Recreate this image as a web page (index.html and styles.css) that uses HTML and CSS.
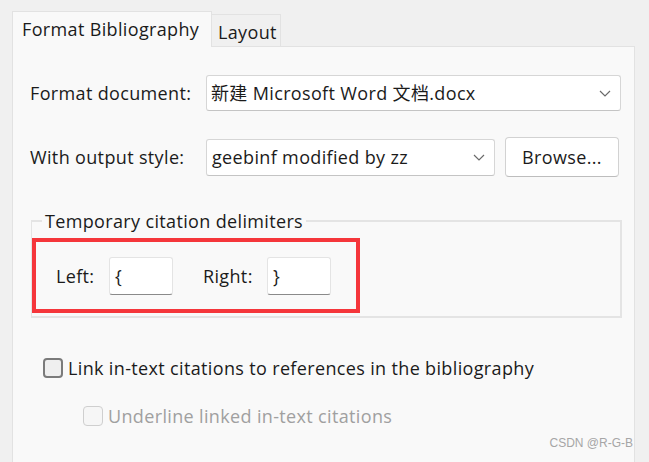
FILE: index.html
```html
<!DOCTYPE html>
<html lang="en">
<head>
<meta charset="utf-8">
<title>Format Bibliography</title>
<link rel="stylesheet" href="styles.css">
</head>
<body>
<div class="window">
  <div class="tabs">
    <div class="tab tab-active">Format Bibliography</div>
    <div class="tab tab-inactive">Layout</div>
  </div>
  <div class="panel">
    <div class="row row-doc">
      <span class="label">Format document:</span>
      <div class="combo combo-doc">
        <span class="combo-text">新建 Microsoft Word 文档.docx</span>
        <svg class="chevron" width="12" height="7" viewBox="0 0 12 7"><polyline points="1,1 6,6 11,1" fill="none" stroke="#6a6a6a" stroke-width="1.2"/></svg>
      </div>
    </div>
    <div class="row row-style">
      <span class="label">With output style:</span>
      <div class="combo combo-style">
        <span class="combo-text">geebinf modified by zz</span>
        <svg class="chevron" width="12" height="7" viewBox="0 0 12 7"><polyline points="1,1 6,6 11,1" fill="none" stroke="#6a6a6a" stroke-width="1.2"/></svg>
      </div>
      <div class="button">Browse...</div>
    </div>
    <fieldset class="group">
      <legend class="group-title">Temporary citation delimiters</legend>
      <div class="highlight">
        <span class="field-label field-left">Left:</span>
        <div class="textbox">{</div>
        <span class="field-label field-right">Right:</span>
        <div class="textbox">}</div>
      </div>
    </fieldset>
    <div class="check check-link">
      <span class="box"></span>
      <span class="check-text">Link in-text citations to references in the bibliography</span>
    </div>
    <div class="check check-underline disabled">
      <span class="box"></span>
      <span class="check-text">Underline linked in-text citations</span>
    </div>
  </div>
  <div class="watermark">CSDN @R-G-B</div>
</div>
</body>
</html>
```
FILE: styles.css
```css
html, body {
  margin: 0;
  padding: 0;
}
body {
  background: #f0f0f0;
  font-family: "Open Sans", "Noto Sans CJK SC", sans-serif;
  font-size: 18px;
  letter-spacing: 0.35px;
  line-height: 22px;
  color: #1b1b1b;
  width: 649px;
  height: 462px;
  overflow: hidden;
}
.window {
  position: relative;
  padding: 11px 0 0 12px;
  height: 451px;
}
.tabs {
  display: flex;
  align-items: flex-end;
  height: 35px;
}
.tab {
  box-sizing: border-box;
  border: 1px solid #e2e2e2;
  border-bottom: none;
  white-space: nowrap;
}
.tab-active {
  width: 200px;
  height: 36px;
  background: #f9f9f9;
  padding: 6px 0 0 9px;
  position: relative;
  z-index: 1;
  margin-bottom: -1px;
}
.tab-inactive {
  width: 69px;
  height: 32px;
  background: #f0f0f0;
  border-left: none;
  padding: 6px 0 0 6px;
}
.panel {
  box-sizing: border-box;
  width: 623px;
  height: 416px;
  background: #f9f9f9;
  border: 1px solid #e2e2e2;
  border-bottom: none;
  padding: 28px 0 0 17px;
}
.row {
  display: flex;
  align-items: center;
}
.label {
  width: 176px;
  flex: none;
  white-space: nowrap;
}
.combo {
  box-sizing: border-box;
  display: flex;
  align-items: center;
  justify-content: space-between;
  background: #ffffff;
  border: 1px solid #d6d6d6;
  border-bottom-color: #c4c4c4;
  border-radius: 3px;
  padding: 0 9px 0 4px;
  white-space: nowrap;
}
.combo-doc {
  width: 415px;
  height: 36px;
}
.row-style {
  margin-top: 26px;
  height: 40px;
}
.combo-style {
  width: 289px;
  height: 37px;
  padding-left: 5px;
}
.chevron {
  flex: none;
}
.button {
  box-sizing: border-box;
  width: 114px;
  height: 40px;
  margin-left: 10px;
  background: #ffffff;
  border: 1px solid #d2d2d2;
  border-bottom-color: #bdbdbd;
  border-radius: 4px;
  display: flex;
  align-items: center;
  justify-content: center;
}
.group {
  box-sizing: border-box;
  width: 591px;
  margin: 34px 0 0 1px;
  padding: 0 0 3px 0;
  border: 2px solid #e4e4e4;
  border-width: 2px 2px 2px 1px;
  min-inline-size: 0;
}
.group-title {
  margin-left: 10px;
  padding: 0 3px;
  line-height: 20px;
}
.highlight {
  box-sizing: border-box;
  width: 328px;
  height: 75px;
  margin-top: 7px;
  border: 4px solid #f5363b;
  display: flex;
  align-items: center;
  padding-left: 20px;
}
.field-label {
  flex: none;
}
.field-left {
  width: 53px;
}
.field-right {
  width: 64px;
  margin-left: 30px;
}
.textbox {
  box-sizing: border-box;
  width: 64px;
  height: 38px;
  background: #ffffff;
  border: 1px solid #e4e4e4;
  border-bottom: 1px solid #8a8a8a;
  border-radius: 3px;
  padding: 7px 0 0 5px;
}
.check {
  display: flex;
  align-items: center;
  white-space: nowrap;
}
.check-link {
  margin: 39px 0 0 13px;
}
.check-underline {
  margin: 26px 0 0 53px;
}
.box {
  box-sizing: border-box;
  width: 20px;
  height: 20px;
  border: 2px solid #7b7b7b;
  border-radius: 4px;
  background: #efefef;
  margin-right: 5px;
  flex: none;
}
.disabled {
  color: #a0a0a0;
}
.disabled .box {
  border: 1.5px solid #cfcfcf;
  background: #f6f6f6;
}
.watermark {
  position: absolute;
  right: 16px;
  bottom: 8px;
  font-family: "Liberation Sans", sans-serif;
  font-size: 12px;
  letter-spacing: 0;
  color: #a6a6a6;
}
```
